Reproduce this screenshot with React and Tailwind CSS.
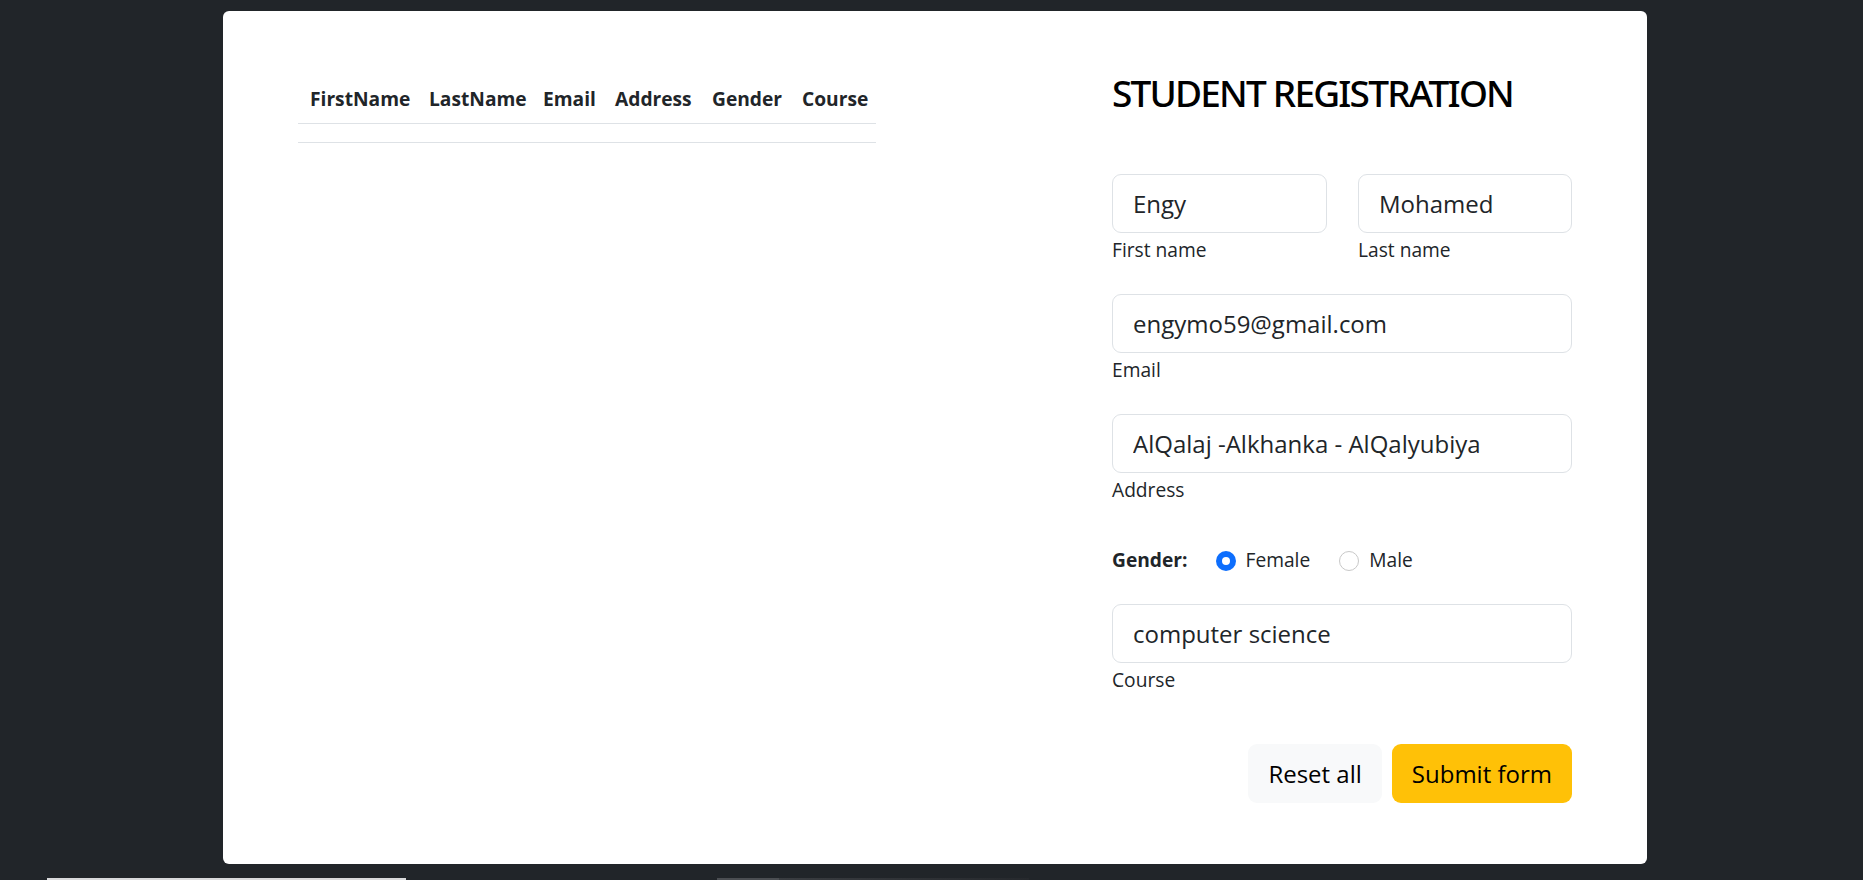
import React from "react";

const font = "font-['Open_Sans','Noto_Sans',sans-serif]";

function Field({ value, label, width }) {
  return (
    <div className={width}>
      <input
        readOnly
        value={value}
        className={`${font} block w-full h-[59px] border border-[#dee2e6] rounded-[9px] px-[20px] text-[24px] text-[#212529] bg-white outline-none`}
      />
      <div className="mt-[3px] text-[19.2px] leading-[28.8px] text-[#212529]">{label}</div>
    </div>
  );
}

export default function App() {
  const cols = [
    ["FirstName", "w-[119px]"],
    ["LastName", "w-[114px]"],
    ["Email", "w-[72px]"],
    ["Address", "w-[97px]"],
    ["Gender", "w-[90px]"],
    ["Course", "w-[86px]"],
  ];
  return (
    <div className={`${font} w-full h-[880px] bg-[#212529] pt-[11px] overflow-hidden`}>
      <div className="ml-[223px] w-[1424px] h-[853px] bg-white rounded-[6px] px-[75px] pt-[59px] flex justify-between">
        <table className="mt-[5px] w-[578px] table-fixed border-collapse self-start text-[#212529]">
          <thead>
            <tr className="border-b border-[#dee2e6]">
              {cols.map(([c, w]) => (
                <th key={c} className={`${w} text-left font-bold text-[19.2px] leading-[28.8px] pl-[12px] pr-0 py-[9.6px] whitespace-nowrap`}>
                  {c}
                </th>
              ))}
            </tr>
          </thead>
          <tbody>
            <tr className="border-b border-[#dee2e6]">
              <td colSpan={6} className="h-[19.2px] p-0"></td>
            </tr>
          </tbody>
        </table>

        <div className="w-[460px] flex flex-col">
          <h2 className="font-['Noto_Sans','Open_Sans',sans-serif] text-[37px] leading-[46px] font-medium text-black tracking-[-1.8px]">STUDENT REGISTRATION</h2>
          <div className="mt-[58px] flex gap-[31px]">
            <Field value="Engy" label="First name" width="w-[215px]" />
            <Field value="Mohamed" label="Last name" width="w-[214px]" />
          </div>
          <div className="mt-[29px]">
            <Field value="engymo59@gmail.com" label="Email" width="w-full" />
          </div>
          <div className="mt-[29px]">
            <Field value="AlQalaj -Alkhanka - AlQalyubiya" label="Address" width="w-full" />
          </div>
          <div className="mt-[42px] h-[29px] flex items-center text-[19.2px] text-[#212529]">
            <span className="font-bold">Gender:</span>
            <span className="ml-[28px] w-[20px] h-[20px] rounded-full bg-[#0d6efd] flex items-center justify-center">
              <span className="w-[8px] h-[8px] rounded-full bg-white"></span>
            </span>
            <span className="ml-[10px]">Female</span>
            <span className="ml-[29px] w-[20px] h-[20px] rounded-full border border-[#c8c8c8] bg-white"></span>
            <span className="ml-[10px]">Male</span>
          </div>
          <div className="mt-[29px]">
            <Field value="computer science" label="Course" width="w-full" />
          </div>
          <div className="mt-[49px] flex justify-end gap-[10px]">
            <button className="h-[59px] px-[20px] rounded-[9px] bg-[#f8f9fa] text-[24px] text-black">Reset all</button>
            <button className="h-[59px] px-[20px] rounded-[9px] bg-[#ffc107] text-[24px] text-black">Submit form</button>
          </div>
        </div>
      </div>
      <div className="mt-[14px] h-[2px] flex">
        <div className="ml-[47px] w-[359px] h-[2px] bg-[#d9dadb]"></div>
        <div className="ml-[311px] w-[62px] h-[2px] bg-[#4b4e52]"></div>
        <div className="w-[250px] h-[2px] bg-gradient-to-r from-[#3a3d41] to-[#26292d]"></div>
      </div>
    </div>
  );
}
